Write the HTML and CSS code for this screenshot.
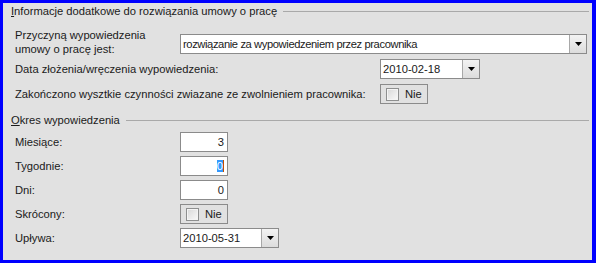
FILE: index.html
```html
<!DOCTYPE html>
<html lang="pl">
<head>
<meta charset="utf-8">
<link rel="stylesheet" href="styles.css">
</head>
<body>
<div class="frame">
  <div class="legend"><span class="ltext"><u>I</u>nformacje dodatkowe do rozwiązania umowy o pracę</span><i class="rule"></i></div>

  <div class="row r1">
    <div class="lbl w1 two">Przyczyną wypowiedzenia<br>umowy o pracę jest:</div>
    <div class="box combo main"><span class="val">rozwiązanie za wypowiedzeniem przez pracownika</span><span class="btn"><svg width="7" height="4" viewBox="0 0 7 4"><path d="M0 0H7L3.5 4Z" fill="#000"/></svg></span></div>
  </div>

  <div class="row r2">
    <div class="lbl w2">Data złożenia/wręczenia wypowiedzenia:</div>
    <div class="box combo date1"><span class="val">2010-02-18</span><span class="btn"><svg width="7" height="4" viewBox="0 0 7 4"><path d="M0 0H7L3.5 4Z" fill="#000"/></svg></span></div>
  </div>

  <div class="row r3">
    <div class="lbl w2">Zakończono wysztkie czynności zwiazane ze zwolnieniem pracownika:</div>
    <div class="box chk"><span class="cb"></span><span class="ctext">Nie</span></div>
  </div>

  <div class="legend l2"><span class="ltext"><u>O</u>kres wypowiedzenia</span><i class="rule"></i></div>

  <div class="row rs first">
    <div class="lbl w1">Miesiące:</div>
    <div class="box num"><span class="val">3</span></div>
  </div>
  <div class="row rs">
    <div class="lbl w1">Tygodnie:</div>
    <div class="box num"><span class="val"><span class="sel">0</span></span></div>
  </div>
  <div class="row rs">
    <div class="lbl w1">Dni:</div>
    <div class="box num"><span class="val">0</span></div>
  </div>
  <div class="row rs">
    <div class="lbl w1">Skrócony:</div>
    <div class="box chk"><span class="cb"></span><span class="ctext">Nie</span></div>
  </div>
  <div class="row rs">
    <div class="lbl w1">Upływa:</div>
    <div class="box combo date2"><span class="val">2010-05-31</span><span class="btn"><svg width="7" height="4" viewBox="0 0 7 4"><path d="M0 0H7L3.5 4Z" fill="#000"/></svg></span></div>
  </div>
</div>
</body>
</html>
```

FILE: styles.css
```css
html, body {
  margin: 0;
  padding: 0;
}
body {
  font-family: "Liberation Sans", Arial, sans-serif;
  font-size: 11.2px;
  color: #1a1a1a;
}
.frame {
  box-sizing: border-box;
  width: 596px;
  height: 263px;
  background: #e1e1e1;
  border-style: solid;
  border-color: #0000ff;
  border-width: 3px 4px 3px 3px;
  padding: 1px 3px 0 8px;
}
.legend {
  display: flex;
  align-items: center;
  height: 14px;
  line-height: 14px;
}
.legend.l2 {
  margin-top: 9px;
}
.ltext {
  white-space: nowrap;
}
.ltext u {
  text-decoration-thickness: 1px;
  text-underline-offset: 1px;
}
.rule {
  flex: 1;
  height: 1px;
  background: #a9a9a9;
  margin-left: 6px;
  margin-top: 1px;
}
.row {
  display: flex;
  align-items: center;
  height: 20px;
}
.r1 {
  height: 28px;
  margin-top: 10px;
}
.r2 {
  margin-top: 3px;
}
.r3 {
  margin-top: 5px;
}
.rs {
  margin-top: 4px;
}
.rs.first {
  margin-top: 5px;
}
.lbl {
  box-sizing: border-box;
  padding-left: 4px;
  white-space: nowrap;
  flex-shrink: 0;
}
.lbl.two {
  line-height: 14px;
}
.w1 {
  width: 169px;
}
.w2 {
  width: 369px;
}
.box {
  box-sizing: border-box;
  height: 20px;
  border: 1px solid #8b8b8b;
  background: #fff;
  display: flex;
  align-items: center;
}
.combo .val {
  flex: 1;
  padding-left: 2px;
  white-space: nowrap;
  overflow: hidden;
}
.main .val {
  letter-spacing: -0.4px;
}
.combo .btn {
  box-sizing: border-box;
  width: 17px;
  height: 18px;
  border-left: 1px solid #a8a8a8;
  background: linear-gradient(#f3f3f3, #dcdcdc);
  display: flex;
  align-items: center;
  justify-content: center;
}
.main {
  width: 407px;
  margin-top: 4px;
}
.date1 {
  width: 100px;
}
.date2 {
  width: 99px;
}
.num {
  width: 48px;
}
.num .val {
  flex: 1;
  text-align: right;
  padding-right: 3px;
}
.sel {
  background: #3399ff;
  color: #fff;
  border-right: 1px solid #c05000;
}
.chk {
  width: 48px;
  background: #e1e1e1;
}
.cb {
  box-sizing: border-box;
  width: 13px;
  height: 13px;
  margin-left: 5px;
  border: 1px solid #8e8f8f;
  background: linear-gradient(135deg, #d8d8d8, #fafafa);
  box-shadow: inset 0 0 0 1px #f4f4f4;
}
.ctext {
  margin-left: 6px;
}
```
